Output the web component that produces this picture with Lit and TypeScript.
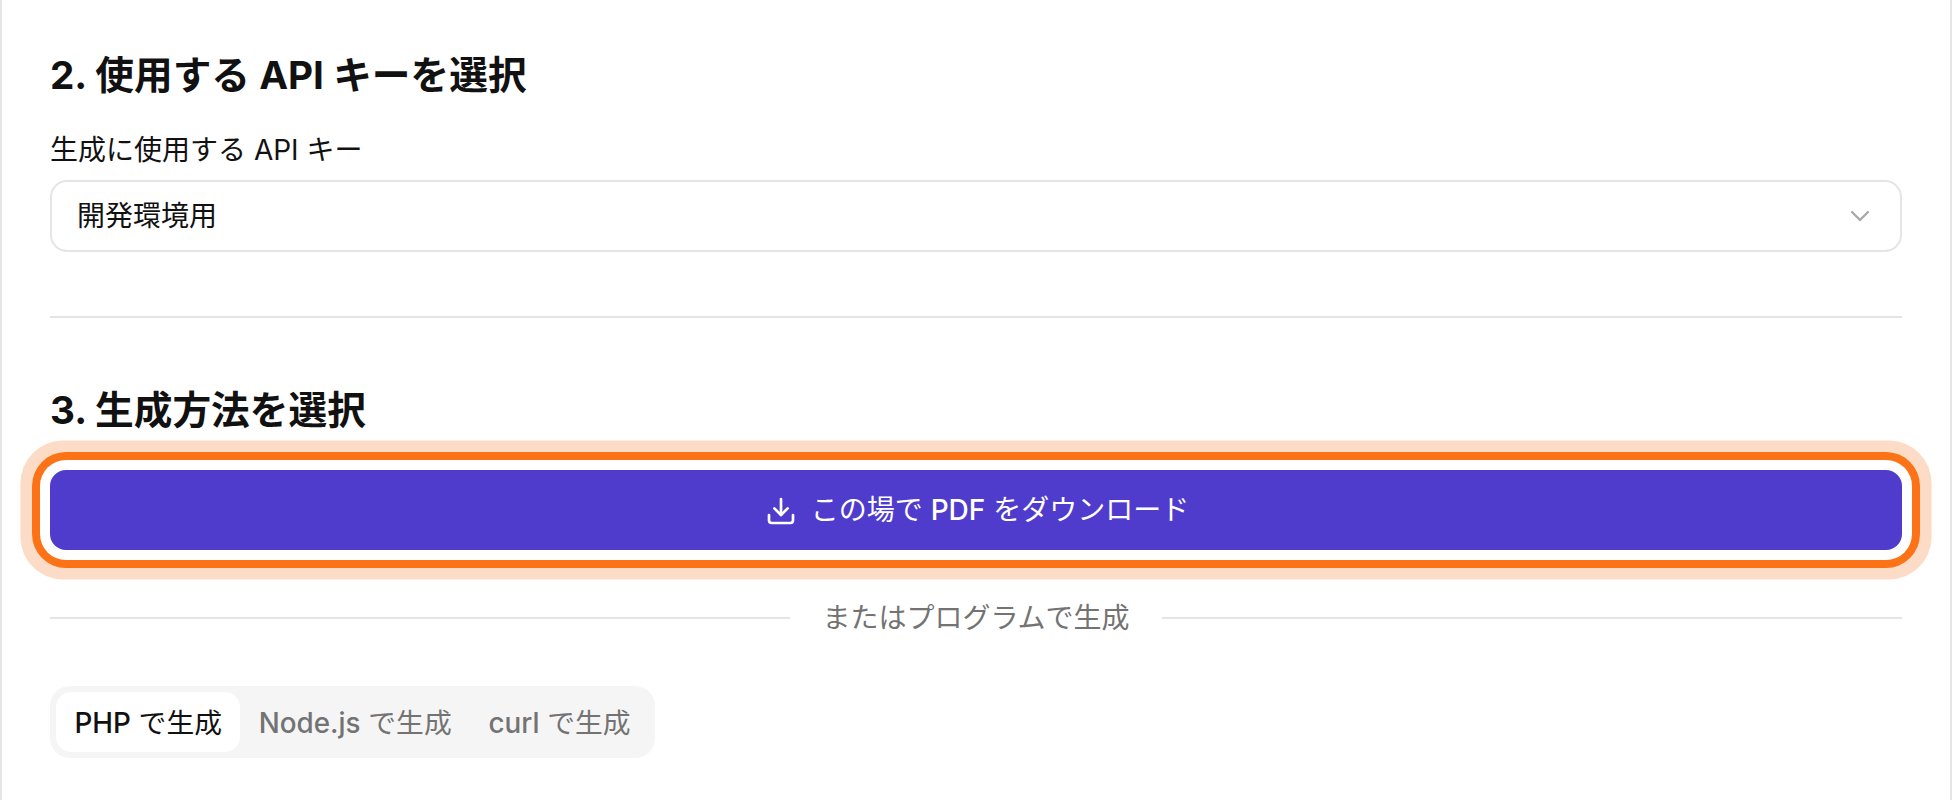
import { LitElement, html, css } from "lit";
import { customElement } from "lit/decorators.js";

@customElement("app-root")
export class AppRoot extends LitElement {
  static styles = css`
    :host {
      display: block;
      font-family: Inter, "Noto Sans CJK JP", sans-serif;
      color: #111;
    }
    .page {
      box-sizing: border-box;
      width: 1952px;
      height: 800px;
      overflow: hidden;
      background: #fff;
      border-left: 2px solid #e5e5e5;
      border-right: 2px solid #e5e5e5;
      padding: 52px 48px 0;
      display: flex;
      flex-direction: column;
      align-items: stretch;
    }
    h2 {
      margin: 0;
      font-size: 38.7px;
      line-height: 46px;
      font-weight: 700;
    }
    .label {
      margin-top: 33px;
      font-size: 28px;
      line-height: 38px;
      font-weight: 400;
    }
    .select {
      box-sizing: border-box;
      margin-top: 11px;
      height: 72px;
      border: 2px solid #e5e5e5;
      border-radius: 17px;
      padding: 0 28px 0 25px;
      display: flex;
      align-items: center;
      justify-content: space-between;
      font-size: 28px;
    }
    .select span {
      padding-bottom: 4px;
    }
    .select svg {
      width: 24px;
      height: 24px;
      color: #a8a8a8;
    }
    .rule {
      margin-top: 64px;
      height: 2px;
      background: #e5e5e5;
    }
    .h3 {
      margin-top: 69px;
    }
    .btn {
      margin-top: 37px;
      height: 80px;
      border-radius: 16px;
      background: #4f3ccd;
      color: #fff;
      display: flex;
      align-items: center;
      justify-content: center;
      gap: 14px;
      font-size: 28px;
      font-weight: 400;
      box-shadow: 0 0 0 10px #fff, 0 0 0 18px #fb7316, 0 0 0 29.6px #fcdcc6;
    }
    .btn span {
      padding-bottom: 4px;
    }
    .btn span span {
      padding-bottom: 0;
    }
    .btn svg {
      width: 32px;
      height: 32px;
      margin: 1px 0 0 2px;
    }
    .m {
      font-weight: 500;
    }
    .or {
      margin-top: 49px;
      display: flex;
      align-items: center;
      gap: 32px;
      font-size: 28px;
      line-height: 38px;
      color: #737373;
    }
    .or i {
      flex: 1;
      height: 2px;
      background: #e5e5e5;
    }
    .tabs {
      margin-top: 49px;
      align-self: flex-start;
      box-sizing: border-box;
      height: 72px;
      padding: 6px;
      border-radius: 20px;
      background: #f5f5f5;
      display: flex;
      gap: 0;
    }
    .tab {
      display: flex;
      align-items: center;
      padding: 0 18.4px 2px;
      border-radius: 15px;
      font-size: 27.8px;
      white-space: pre;
      color: #737373;
    }
    .tab.on {
      background: #fff;
      color: #111;
    }
  `;

  render() {
    return html`<div class="page">
      <h2>2. 使用する API キーを選択</h2>
      <div class="label">生成に使用する API キー</div>
      <div class="select">
        <span>開発環境用</span>
        <svg viewBox="0 0 24 24" fill="none" stroke="currentColor" stroke-width="2.4" stroke-linecap="round" stroke-linejoin="round"><path d="m4 8 8 8 8-8"></path></svg>
      </div>
      <div class="rule"></div>
      <h2 class="h3">3. 生成方法を選択</h2>
      <div class="btn">
        <svg viewBox="0 0 24 24" fill="none" stroke="currentColor" stroke-width="2" stroke-linecap="round" stroke-linejoin="round"><path d="M21 15v4a2 2 0 0 1-2 2H5a2 2 0 0 1-2-2v-4"></path><path d="m7 10 5 5 5-5"></path><path d="M12 15V3"></path></svg>
        <span>この場で <span class="m">PDF</span> をダウンロード</span>
      </div>
      <div class="or"><i></i><span>またはプログラムで生成</span><i></i></div>
      <div class="tabs">
        <div class="tab on"><span><span class="m">PHP</span> で生成</span></div>
        <div class="tab"><span><span class="m">Node.js</span> で生成</span></div>
        <div class="tab"><span><span class="m">curl</span> で生成</span></div>
      </div>
    </div>`;
  }
}
